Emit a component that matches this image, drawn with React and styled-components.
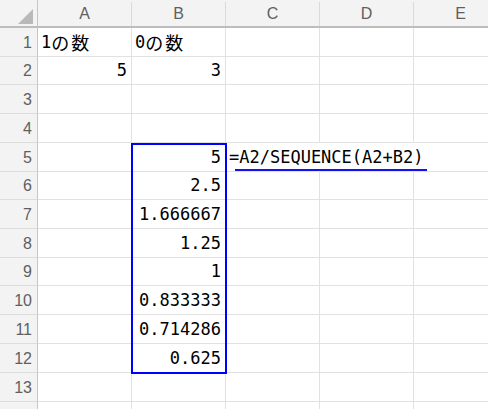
import styled, { createGlobalStyle } from 'styled-components'

const GlobalStyle = createGlobalStyle`
  html, body {
    margin: 0;
    padding: 0;
    background: #fff;
    overflow: hidden;
  }
`

const COLS = ['A', 'B', 'C', 'D', 'E']
const HEIGHTS = [29, 28, 29, 29, 29, 28, 29, 29, 28, 29, 29, 29, 29, 29]
const VISIBLE_LABELS = 13

const cells = {
  A1: { text: '1の数' },
  B1: { text: '0の数' },
  A2: { text: '5', num: true },
  B2: { text: '3', num: true },
  B5: { text: '5', num: true },
  B6: { text: '2.5', num: true },
  B7: { text: '1.666667', num: true },
  B8: { text: '1.25', num: true },
  B9: { text: '1', num: true },
  B10: { text: '0.833333', num: true },
  B11: { text: '0.714286', num: true },
  B12: { text: '0.625', num: true },
  C5: { text: '=A2/SEQUENCE(A2+B2)', formula: true },
}

const Sheet = styled.div`
  position: relative;
  width: 488px;
  height: 409px;
  overflow: hidden;
  display: flex;
  flex-direction: column;
`

const HeaderRow = styled.div`
  display: flex;
  align-items: flex-end;
  height: 26px;
  flex: none;
  background: #f3f3f3;
  border-bottom: 2px solid #bdbdbd;
`

const Corner = styled.div`
  position: relative;
  width: 37px;
  height: 26px;
  flex: none;
  border-right: 1px solid #c6c6c6;
  &::after {
    content: '';
    position: absolute;
    right: 4px;
    bottom: 2px;
    width: 0;
    height: 0;
    border-left: 15px solid transparent;
    border-bottom: 15px solid #b9b9b9;
  }
`

const ColHead = styled.div`
  width: 93px;
  height: 23px;
  flex: none;
  border-right: 1px solid #dadada;
  display: flex;
  align-items: center;
  justify-content: center;
  font-family: 'Liberation Sans', Arial, sans-serif;
  font-size: 16px;
  color: #5f5f5f;
  padding-bottom: 1px;
`

const Row = styled.div`
  display: flex;
  height: ${(p) => p.$h}px;
  flex: none;
`

const RowHead = styled.div`
  width: 32px;
  flex: none;
  background: #f3f3f3;
  border-right: 1px solid #c6c6c6;
  border-bottom: 1px solid #dcdcdc;
  display: flex;
  align-items: flex-end;
  justify-content: flex-end;
  padding: 0 5px 5px 0;
  font-family: 'Liberation Sans', Arial, sans-serif;
  font-size: 16px;
  color: #5f5f5f;
  line-height: 1;
`

const Cell = styled.div`
  flex: none;
  border-right: ${(p) => (p.$hideRight ? '1px solid transparent' : '1px solid #e1e1e1')};
  border-bottom: 1px solid #e1e1e1;
  display: flex;
  align-items: flex-end;
  justify-content: ${(p) => (p.$num ? 'flex-end' : 'flex-start')};
  padding: 0 4px 5px 3px;
  box-sizing: border-box;
  width: 94px;
  font-family: 'DejaVu Sans Mono', 'Noto Sans CJK JP', monospace;
  font-size: 17px;
  line-height: 1;
  color: #000;
  white-space: nowrap;
  overflow: visible;
`

const Jp = styled.span`
  font-family: 'Noto Sans CJK JP', sans-serif;
  font-size: 18px;
  letter-spacing: 2px;
`

const Formula = styled.span`
  position: relative;
  z-index: 1;
  padding-right: 4px;
  &::after {
    content: '';
    position: absolute;
    left: 6px;
    right: 0;
    bottom: -5px;
    height: 2px;
    background: #1212ee;
  }
`

const Selection = styled.div`
  position: absolute;
  left: 131px;
  top: 143px;
  width: 96px;
  height: 231px;
  box-sizing: border-box;
  border: 2px solid #0000ff;
  pointer-events: none;
`

function renderText(text) {
  const m = text.match(/^([0-9]*)(.*)$/)
  if (/[\u3040-\u9fff]/.test(text)) {
    return (
      <>
        {m[1]}
        <Jp>{m[2]}</Jp>
      </>
    )
  }
  return text
}

export default function App() {
  return (
    <>
      <GlobalStyle />
      <Sheet>
        <HeaderRow>
          <Corner />
          {COLS.map((c) => (
            <ColHead key={c}>{c}</ColHead>
          ))}
        </HeaderRow>
        {HEIGHTS.map((h, i) => {
          const r = i + 1
          return (
            <Row key={r} $h={h}>
              <RowHead>{r <= VISIBLE_LABELS ? r : ''}</RowHead>
              {COLS.map((c) => {
                const cell = cells[c + r]
                const hideRight = r === 5 && (c === 'C' || c === 'D')
                return (
                  <Cell key={c} $num={cell && cell.num} $hideRight={hideRight}>
                    {cell &&
                      (cell.formula ? (
                        <Formula>{cell.text}</Formula>
                      ) : (
                        renderText(cell.text)
                      ))}
                  </Cell>
                )
              })}
            </Row>
          )
        })}
        <Selection />
      </Sheet>
    </>
  )
}
